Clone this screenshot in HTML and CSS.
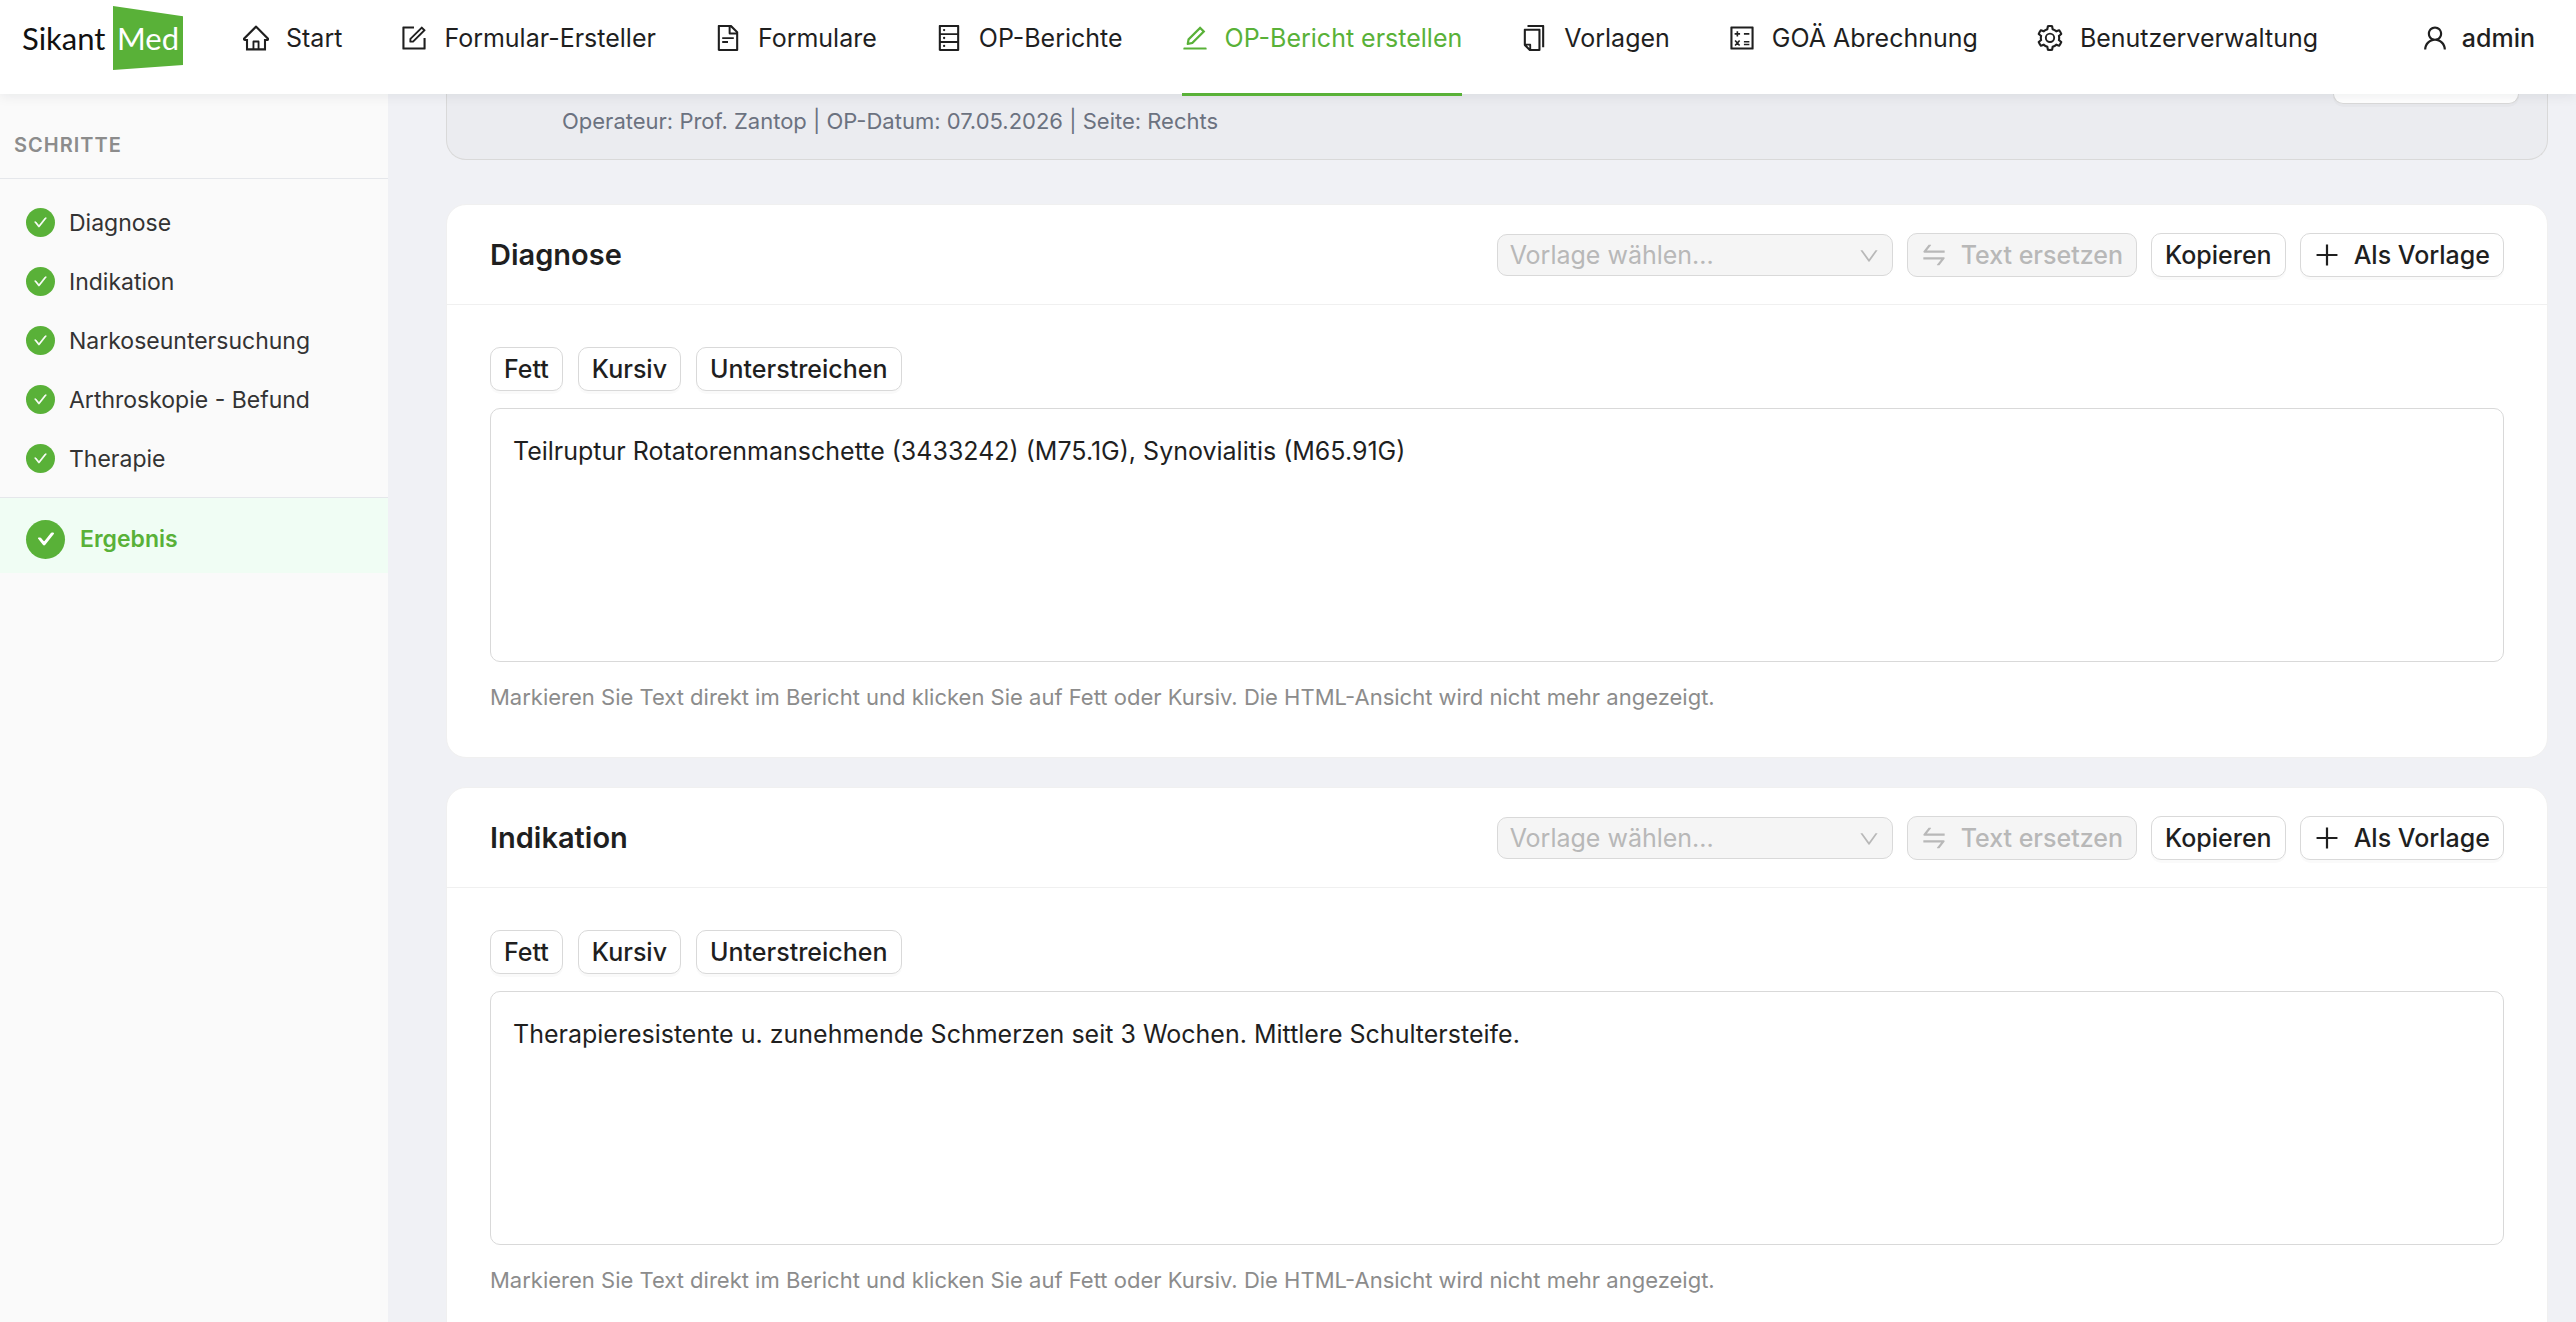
FILE: index.html
```html
<!DOCTYPE html>
<html lang="de">
<head>
    <meta charset="UTF-8">
    <meta name="viewport" content="width=device-width, initial-scale=1.0">
    <title>SikantMed</title>
    <link rel="stylesheet" href="styles.css">
</head>
<body>
    <svg class="sprite" aria-hidden="true">
        <symbol id="home" viewBox="64 64 896 896"><path d="M946.500 505L560.100 118.800l-25.900-25.900a31.500 31.500 0 0 0-44.400 0L77.500 505a63.900 63.900 0 0 0-18.800 46c.4 35.200 29.700 63.300 64.900 63.300h42.500V940h691.800V614.300h43.400c17.100 0 33.200-6.700 45.300-18.800a63.600 63.600 0 0 0 18.700-45.300c0-17-6.700-33.100-18.800-45.200zM568 868H456V664h112v204zm217.900-325.700V868H632V640c0-22.100-17.900-40-40-40H432c-22.100 0-40 17.900-40 40v228H238.100V542.300h-96l370-369.700 23.100 23.100L882 542.300h-96.100z"/></symbol>
        <symbol id="form" viewBox="64 64 896 896"><path d="M904 512h-56c-4.400 0-8 3.600-8 8v320H184V184h320c4.400 0 8-3.600 8-8v-56c0-4.400-3.600-8-8-8H144c-17.700 0-32 14.300-32 32v736c0 17.700 14.300 32 32 32h736c17.700 0 32-14.300 32-32V520c0-4.400-3.600-8-8-8z"/><path d="M355.900 534.900L354 653.800c-.1 8.900 7.100 16.200 16 16.200h.4l118-2.900c2-.1 4-.9 5.400-2.300l415.900-415c3.100-3.100 3.100-8.200 0-11.300L785.400 114.300c-1.600-1.600-3.600-2.300-5.700-2.300s-4.100.8-5.700 2.300l-415.800 415a8.300 8.300 0 0 0-2.300 5.600zm63.500 23.600L779.700 199l45.200 45.100-360.500 359.700-45.700 1.100.7-46.400z"/></symbol>
        <symbol id="file" viewBox="64 64 896 896"><path d="M854.600 288.600L639.400 73.400c-6-6-14.100-9.400-22.600-9.400H192c-17.700 0-32 14.300-32 32v832c0 17.700 14.300 32 32 32h640c17.700 0 32-14.300 32-32V311.300c0-8.500-3.400-16.700-9.400-22.700zM790.200 326H602V137.800L790.200 326zm1.800 562H232V136h302v216a42 42 0 0 0 42 42h216v494zM504 618H320c-4.400 0-8 3.600-8 8v48c0 4.400 3.600 8 8 8h184c4.400 0 8-3.600 8-8v-48c0-4.400-3.600-8-8-8zM312 490v48c0 4.400 3.600 8 8 8h384c4.400 0 8-3.600 8-8v-48c0-4.400-3.600-8-8-8H320c-4.400 0-8 3.600-8 8z"/></symbol>
        <symbol id="database" viewBox="64 64 896 896"><path d="M832 64H192c-17.700 0-32 14.300-32 32v832c0 17.700 14.300 32 32 32h640c17.700 0 32-14.300 32-32V96c0-17.700-14.300-32-32-32zm-600 72h560v208H232V136zm560 480H232V408h560v208zm0 272H232V680h560v208zM304 240a40 40 0 1 0 80 0 40 40 0 1 0-80 0zm0 272a40 40 0 1 0 80 0 40 40 0 1 0-80 0zm0 272a40 40 0 1 0 80 0 40 40 0 1 0-80 0z"/></symbol>
        <symbol id="edit" viewBox="64 64 896 896"><path d="M257.700 752c2 0 4-.2 6-.5L431.900 722c2-.4 3.900-1.300 5.300-2.800l423.900-423.900a9.960 9.960 0 0 0 0-14.100L694.900 114.900c-1.900-1.900-4.400-2.900-7.100-2.900s-5.200 1-7.100 2.900L256.800 538.800c-1.500 1.500-2.400 3.300-2.800 5.300l-29.500 168.200a33.500 33.500 0 0 0 9.400 29.800c6.600 6.400 14.900 9.900 23.800 9.900zm67.400-174.400L687.800 215l73.300 73.300-362.700 362.600-88.900 15.700 15.600-89zM880 836H144c-17.700 0-32 14.300-32 32v36c0 4.400 3.600 8 8 8h784c4.400 0 8-3.600 8-8v-36c0-17.700-14.300-32-32-32z"/></symbol>
        <symbol id="snippets" viewBox="64 64 896 896"><path d="M832 64H296c-4.400 0-8 3.600-8 8v56c0 4.400 3.600 8 8 8h496v688c0 4.400 3.600 8 8 8h56c4.400 0 8-3.600 8-8V96c0-17.700-14.300-32-32-32zM704 192H192c-17.700 0-32 14.300-32 32v530.700c0 8.500 3.400 16.600 9.400 22.600l173.300 173.300c2.200 2.200 4.700 4 7.400 5.500v1.900h4.200c3.500 1.300 7.200 2 11 2H704c17.700 0 32-14.300 32-32V224c0-17.700-14.300-32-32-32zM350 856.200L263.900 770H350v86.200zM664 888H414V746c0-22.100-17.900-40-40-40H232V264h432v624z"/></symbol>
        <symbol id="calculator" viewBox="64 64 896 896"><path d="M880 112H144c-17.700 0-32 14.300-32 32v736c0 17.700 14.300 32 32 32h736c17.700 0 32-14.300 32-32V144c0-17.700-14.300-32-32-32zm-40 728H184V184h656v656z"/><path d="M258 370h188M352 276v188M578 370h188M274 596l156 176M430 596L274 772M578 640h188M578 738h188" fill="none" stroke="currentColor" stroke-width="56"/></symbol>
        <symbol id="setting" viewBox="64 64 896 896"><path d="M924.800 625.700l-65.500-56c3.100-19 4.700-38.400 4.700-57.800s-1.600-38.800-4.700-57.800l65.500-56a32.030 32.030 0 0 0 9.300-35.200l-.9-2.600a443.740 443.740 0 0 0-79.700-137.900l-1.800-2.100a32.120 32.120 0 0 0-35.100-9.500l-81.300 28.900c-30-24.600-63.500-44-99.700-57.600l-15.700-85a32.050 32.050 0 0 0-25.800-25.700l-2.700-.5c-52.100-9.400-106.900-9.400-159 0l-2.700.5a32.050 32.050 0 0 0-25.800 25.700l-15.800 85.400a351.860 351.860 0 0 0-99 57.400l-81.900-29.100a32 32 0 0 0-35.100 9.500l-1.800 2.100a446.020 446.020 0 0 0-79.700 137.900l-.9 2.600c-4.500 12.500-.8 26.500 9.300 35.200l66.300 56.600c-3.100 18.800-4.600 38-4.600 57.100 0 19.200 1.500 38.400 4.600 57.100L99 625.500a32.030 32.030 0 0 0-9.300 35.200l.9 2.600c18.100 50.400 44.900 96.900 79.700 137.900l1.800 2.100a32.120 32.120 0 0 0 35.100 9.500l81.900-29.100c29.800 24.500 63.100 43.900 99 57.400l15.800 85.400a32.050 32.050 0 0 0 25.800 25.700l2.700.5a449.400 449.400 0 0 0 159 0l2.700-.5a32.050 32.050 0 0 0 25.800-25.700l15.700-85a350 350 0 0 0 99.700-57.600l81.300 28.900a32 32 0 0 0 35.100-9.500l1.800-2.100c34.800-41.100 61.600-87.500 79.700-137.900l.9-2.600c4.500-12.300.8-26.300-9.300-35zM788.300 465.900c2.500 15.100 3.800 30.600 3.800 46.100s-1.300 31-3.800 46.100l-6.600 40.100 74.700 63.900a370.030 370.030 0 0 1-42.600 73.600L721 702.800l-31.400 25.800c-23.900 19.600-50.500 35-79.300 45.800l-38.100 14.300-17.900 97a377.500 377.500 0 0 1-85 0l-17.900-97.200-37.800-14.500c-28.500-10.800-55-26.200-78.700-45.700l-31.400-25.900-93.400 33.200c-17-22.900-31.200-47.600-42.600-73.600l75.500-64.500-6.500-40c-2.400-14.900-3.700-30.300-3.700-45.500 0-15.300 1.200-30.600 3.700-45.500l6.500-40-75.500-64.500c11.300-26.100 25.600-50.700 42.600-73.600l93.400 33.200 31.400-25.900c23.700-19.500 50.200-34.900 78.700-45.700l37.900-14.300 17.900-97.200c28.100-3.200 56.800-3.200 85 0l17.900 97 38.100 14.300c28.700 10.800 55.400 26.200 79.300 45.800l31.400 25.800 92.800-32.900c17 22.900 31.200 47.600 42.600 73.600L781.800 426l6.500 39.900z"/><circle cx="512" cy="506" r="144" fill="none" stroke="currentColor" stroke-width="66"/></symbol>
        <symbol id="user" viewBox="64 64 896 896"><path d="M858.500 763.600a374 374 0 0 0-80.600-119.500 375.630 375.630 0 0 0-119.500-80.600c-.4-.2-.8-.3-1.200-.5C719.500 518 760 444.700 760 362c0-137-111-248-248-248S264 225 264 362c0 82.700 40.500 156 102.800 201.100-.4.200-.8.300-1.200.5-44.800 18.900-85 46-119.500 80.600a375.630 375.630 0 0 0-80.600 119.500A371.700 371.700 0 0 0 136 901.800a8 8 0 0 0 8 8.200h60c4.400 0 7.900-3.500 8-7.800 2-77.200 33-149.500 87.800-204.300 56.700-56.700 132-87.900 212.200-87.900s155.500 31.200 212.200 87.900C779 752.700 810 825 812 902.200c.1 4.400 3.600 7.800 8 7.800h60a8 8 0 0 0 8-8.200c-1-47.800-10.900-94.300-29.500-138.200zM512 534c-45.900 0-89.100-17.900-121.600-50.400S340 407.900 340 362c0-45.900 17.900-89.100 50.400-121.600S466.100 190 512 190s89.100 17.900 121.600 50.400S684 316.100 684 362c0 45.900-17.900 89.100-50.400 121.600S557.900 534 512 534z"/></symbol>
        <symbol id="swap" viewBox="64 64 896 896"><path d="M847.900 592H152c-4.400 0-8 3.600-8 8v60c0 4.400 3.600 8 8 8h605.200L612.900 851c-4.100 5.200-.4 13 6.300 13h72.500c4.900 0 9.500-2.200 12.600-6.100l168.800-214.100c16.500-21 1.600-51.800-25.200-51.800zM872 356H266.800l144.300-183c4.100-5.200.4-13-6.300-13h-72.500c-4.900 0-9.500 2.200-12.600 6.100L150.900 380.200c-16.500 21-1.600 51.800 25.100 51.800h696c4.400 0 8-3.600 8-8v-60c0-4.400-3.600-8-8-8z"/></symbol>
        <symbol id="plus" viewBox="64 64 896 896"><path d="M474 152h76v720h-76zM152 474h720v76H152z"/></symbol>
        <symbol id="down" viewBox="64 64 896 896"><path d="M884 256h-75c-5.100 0-9.900 2.500-12.900 6.600L512 654.200 227.900 262.600c-3-4.100-7.800-6.600-12.900-6.600h-75c-6.500 0-10.300 7.400-6.500 12.700l352.600 486.100c12.800 17.600 39 17.600 51.700 0l352.600-486.100c3.900-5.300.1-12.700-6.400-12.700z"/></symbol>
        <symbol id="check" viewBox="64 64 896 896"><path d="M912 190h-69.900c-9.800 0-19.100 4.500-25.100 12.200L404.700 724.500 207 474a32 32 0 0 0-25.100-12.200H112c-6.700 0-10.400 7.700-6.300 12.900l273.900 347c12.800 16.200 37.400 16.200 50.300 0l488.400-618.900c4.100-5.100.4-12.800-6.300-12.800z"/></symbol>
    </svg>

    <header class="header">
        <a class="logo" href="#"><span class="logo-name">Sikant</span><span class="logo-box">Med</span></a>
        <nav class="nav">
            <a class="nav-item" href="#"><svg class="icon"><use href="#home"/></svg>Start</a>
            <a class="nav-item" href="#"><svg class="icon"><use href="#form"/></svg>Formular-Ersteller</a>
            <a class="nav-item" href="#"><svg class="icon"><use href="#file"/></svg>Formulare</a>
            <a class="nav-item" href="#"><svg class="icon"><use href="#database"/></svg>OP-Berichte</a>
            <a class="nav-item active" href="#"><svg class="icon"><use href="#edit"/></svg>OP-Bericht erstellen</a>
            <a class="nav-item" href="#"><svg class="icon"><use href="#snippets"/></svg>Vorlagen</a>
            <a class="nav-item" href="#"><svg class="icon"><use href="#calculator"/></svg>GOÄ Abrechnung</a>
            <a class="nav-item" href="#"><svg class="icon"><use href="#setting"/></svg>Benutzerverwaltung</a>
        </nav>
        <button class="user" type="button"><svg class="icon"><use href="#user"/></svg>admin</button>
    </header>

    <div class="layout">
        <aside class="sidebar">
            <h2 class="sidebar-title">SCHRITTE</h2>
            <nav class="steps">
                <a class="step" href="#"><span class="dot"><svg><use href="#check"/></svg></span>Diagnose</a>
                <a class="step" href="#"><span class="dot"><svg><use href="#check"/></svg></span>Indikation</a>
                <a class="step" href="#"><span class="dot"><svg><use href="#check"/></svg></span>Narkoseuntersuchung</a>
                <a class="step" href="#"><span class="dot"><svg><use href="#check"/></svg></span>Arthroskopie - Befund</a>
                <a class="step" href="#"><span class="dot"><svg><use href="#check"/></svg></span>Therapie</a>
            </nav>
            <a class="result" href="#"><span class="dot dot-large"><svg><use href="#check"/></svg></span>Ergebnis</a>
        </aside>

        <main class="content">
            <section class="summary">
                <p class="summary-text">Operateur: Prof. Zantop | OP-Datum: 07.05.2026 | Seite: Rechts</p>
                <button class="btn summary-btn" type="button" aria-label="Bearbeiten"></button>
            </section>

            <section class="card">
                <div class="card-head">
                    <h3 class="card-title">Diagnose</h3>
                    <div class="actions">
                        <div class="select">
                            <select aria-label="Vorlage für Diagnose" disabled>
                                <option>Vorlage wählen...</option>
                            </select>
                            <svg class="arrow"><use href="#down"/></svg>
                        </div>
                        <button class="btn" type="button" disabled><svg class="icon"><use href="#swap"/></svg>Text ersetzen</button>
                        <button class="btn" type="button">Kopieren</button>
                        <button class="btn" type="button"><svg class="icon"><use href="#plus"/></svg>Als Vorlage</button>
                    </div>
                </div>
                <div class="card-body">
                    <div class="toolbar">
                        <button class="btn" type="button">Fett</button>
                        <button class="btn" type="button">Kursiv</button>
                        <button class="btn" type="button">Unterstreichen</button>
                    </div>
                    <textarea class="editor" aria-label="Diagnose">Teilruptur Rotatorenmanschette (3433242) (M75.1G), Synovialitis (M65.91G)</textarea>
                    <p class="hint">Markieren Sie Text direkt im Bericht und klicken Sie auf Fett oder Kursiv. Die HTML-Ansicht wird nicht mehr angezeigt.</p>
                </div>
            </section>

            <section class="card">
                <div class="card-head">
                    <h3 class="card-title">Indikation</h3>
                    <div class="actions">
                        <div class="select">
                            <select aria-label="Vorlage für Indikation" disabled>
                                <option>Vorlage wählen...</option>
                            </select>
                            <svg class="arrow"><use href="#down"/></svg>
                        </div>
                        <button class="btn" type="button" disabled><svg class="icon"><use href="#swap"/></svg>Text ersetzen</button>
                        <button class="btn" type="button">Kopieren</button>
                        <button class="btn" type="button"><svg class="icon"><use href="#plus"/></svg>Als Vorlage</button>
                    </div>
                </div>
                <div class="card-body">
                    <div class="toolbar">
                        <button class="btn" type="button">Fett</button>
                        <button class="btn" type="button">Kursiv</button>
                        <button class="btn" type="button">Unterstreichen</button>
                    </div>
                    <textarea class="editor" aria-label="Indikation">Therapieresistente u. zunehmende Schmerzen seit 3 Wochen. Mittlere Schultersteife.</textarea>
                    <p class="hint">Markieren Sie Text direkt im Bericht und klicken Sie auf Fett oder Kursiv. Die HTML-Ansicht wird nicht mehr angezeigt.</p>
                </div>
            </section>
        </main>
    </div>
</body>
</html>
```

FILE: styles.css
```css
* {
    box-sizing: border-box;
}

body {
    display: flex;
    flex-direction: column;
    height: 100vh;
    margin: 0;
    overflow: hidden;
    background-color: #f0f1f5;
    color: #1f1f1f;
    font-family: Inter, "Liberation Sans", sans-serif;
    font-size: 25px;
}

a {
    color: inherit;
    text-decoration: none;
}

.sprite {
    display: none;
}

.icon {
    width: 26px;
    height: 26px;
    flex: none;
    fill: currentColor;
}

.header {
    position: relative;
    z-index: 1;
    display: flex;
    align-items: flex-start;
    flex: none;
    height: 94px;
    padding: 0 41px 0 22px;
    background-color: #fff;
    box-shadow: 0 2px 12px rgba(0, 21, 41, 0.08);
}

.logo {
    display: flex;
    align-items: center;
    height: 76px;
    margin-right: 60px;
    color: #111;
    font-family: Lato, "Open Sans", sans-serif;
    font-size: 31px;
}

.logo-name {
    width: 91px;
}

.logo-box {
    width: 70px;
    height: 64px;
    padding-left: 4px;
    background-color: #59b138;
    clip-path: polygon(0 0, 100% 16%, 100% 92%, 0 100%);
    color: #fff;
    line-height: 64px;
}

.nav {
    display: flex;
    gap: 59px;
    flex: 1;
}

.nav-item {
    display: flex;
    gap: 17px;
    align-items: center;
    height: 96px;
    padding-bottom: 17px;
    border-bottom: 3px solid transparent;
    white-space: nowrap;
}

.nav-item.active {
    border-color: #59b138;
    color: #59b138;
}

.user {
    display: flex;
    gap: 14px;
    align-items: center;
    height: 76px;
    padding: 0;
    border: none;
    background: none;
    color: inherit;
    font: inherit;
    font-weight: 500;
}

.layout {
    display: flex;
    flex: 1;
    min-height: 0;
}

.sidebar {
    flex: none;
    width: 388px;
    background-color: #fafafa;
}

.sidebar-title {
    margin: 0;
    padding: 38px 14px 20px;
    border-bottom: 1px solid #e5e7eb;
    color: #8c8c8c;
    font-size: 20px;
    font-weight: 600;
    letter-spacing: 1px;
    line-height: 26px;
}

.steps {
    padding: 14px 0 9px;
    border-bottom: 1px solid #e5e7eb;
}

.step {
    display: flex;
    gap: 14px;
    align-items: center;
    height: 59px;
    padding-left: 26px;
    color: #333;
    font-size: 23px;
}

.dot {
    display: flex;
    align-items: center;
    justify-content: center;
    width: 29px;
    height: 29px;
    border-radius: 50%;
    background-color: #59b138;
}

.dot svg {
    width: 13px;
    height: 13px;
    fill: #fff;
    stroke: #fff;
    stroke-width: 40px;
}

.dot-large {
    width: 39px;
    height: 39px;
}

.dot-large svg {
    width: 16px;
    height: 16px;
    stroke-width: 80px;
}

.result {
    display: flex;
    gap: 15px;
    align-items: center;
    height: 75px;
    padding: 7px 0 0 26px;
    background-color: #f0fdf4;
    color: #59b138;
    font-size: 23px;
    font-weight: 600;
}

.content {
    flex: 1;
    min-width: 0;
    padding: 0 28px 0 58px;
    overflow: hidden;
}

.summary {
    display: flex;
    justify-content: space-between;
    align-items: flex-start;
    height: 66px;
    margin-bottom: 44px;
    padding: 0 28px 0 115px;
    border: 1px solid #d9d9d9;
    border-top: none;
    border-radius: 0 0 20px 20px;
    background-color: #ebecf0;
}

.summary-text {
    margin: 0;
    padding-top: 10px;
    color: #6b7280;
    font-size: 22px;
    line-height: 34px;
}

.card {
    margin-bottom: 29px;
    border: 1px solid #f0f0f0;
    border-radius: 20px;
    background-color: #fff;
}

.card-head {
    display: flex;
    align-items: center;
    justify-content: space-between;
    height: 100px;
    padding: 0 43px;
    border-bottom: 1px solid #f0f0f0;
}

.card-title {
    margin: 0;
    font-size: 29px;
    font-weight: 600;
}

.actions,
.toolbar {
    display: flex;
    gap: 14px;
    align-items: center;
}

.toolbar {
    gap: 15px;
}

.btn {
    display: flex;
    gap: 14px;
    align-items: center;
    height: 44px;
    padding: 0 13px;
    border: 1px solid #d9d9d9;
    border-radius: 10px;
    background-color: #fff;
    box-shadow: 0 3px 0 rgba(0, 0, 0, 0.02);
    color: #1f1f1f;
    font: inherit;
    font-weight: 500;
    white-space: nowrap;
}

.btn:disabled {
    border-color: #d9d9d9;
    background-color: #f5f5f5;
    box-shadow: none;
    color: #b8b8b8;
}

.summary-btn {
    width: 186px;
    height: 10px;
    border-top: none;
    border-radius: 0 0 10px 10px;
}

.select {
    position: relative;
}

.select select {
    width: 396px;
    height: 42px;
    padding: 0 12px;
    border: 1px solid #d9d9d9;
    border-radius: 10px;
    appearance: none;
    background-color: #f5f5f5;
    color: #b8b8b8;
    font: inherit;
    opacity: 1;
}

.arrow {
    position: absolute;
    top: 12px;
    right: 14px;
    width: 20px;
    height: 20px;
    fill: #b8b8b8;
}

.card-body {
    padding: 42px 43px 43px;
}

.editor {
    display: block;
    width: 100%;
    height: 254px;
    margin-top: 17px;
    padding: 22px;
    border: 1px solid #d9d9d9;
    border-radius: 10px;
    color: #1f1f1f;
    font: inherit;
    line-height: 40px;
    resize: none;
}

.hint {
    margin: 18px 0 0;
    color: #8c8c8c;
    font-size: 22px;
    line-height: 34px;
}
```
